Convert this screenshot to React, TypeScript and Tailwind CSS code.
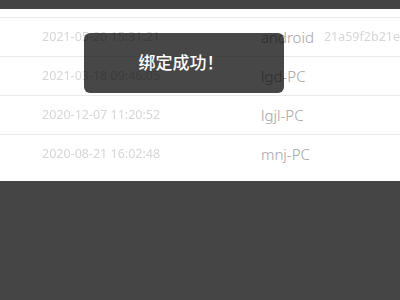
import React from 'react';

const rows = [
  { time: '2021-05-20 15:31:21', device: 'android', id: '21a59f2b21e7' },
  { time: '2021-03-18 09:46:05', device: 'lgd-PC', id: '' },
  { time: '2020-12-07 11:20:52', device: 'lgjl-PC', id: '' },
  { time: '2020-08-21 16:02:48', device: 'mnj-PC', id: '' },
];

const App: React.FC = () => {
  return (
    <div
      className="relative w-[400px] h-[300px] overflow-hidden bg-[#454545]"
      style={{ fontFamily: '"Noto Sans", "Noto Sans CJK SC", sans-serif' }}
    >
      <div className="h-[9px] bg-[#444444]" />
      <div className="bg-white pb-[7px]">
        <div className="h-[9px] border-b border-[#e9e9e9]" />
        {rows.map((row, i) => (
          <div
            key={i}
            className={`flex items-center h-[39px] ${i < rows.length - 1 ? 'border-b border-[#e9e9e9]' : ''}`}
          >
            <div className="w-[261px] shrink-0 pl-[42px] text-[12.5px] text-[#d6d6d6] blur-[0.5px] whitespace-nowrap">{row.time}</div>
            <div className="flex flex-1 min-w-0 overflow-hidden items-center gap-[10px] text-[15px] font-light text-[#a3a3a3] whitespace-nowrap">
              <span>{row.device}</span>
              {row.id && <span className="text-[12.5px] font-normal text-[#d6d6d6] blur-[0.5px]">{row.id}</span>}
            </div>
          </div>
        ))}
      </div>

      {/* toast */}
      <div className="absolute left-[84px] top-[33px] w-[200px] h-[60px] rounded-[6px] bg-[rgba(0,0,0,0.72)] flex items-center justify-center">
        <span className="text-white text-[17px] font-medium pr-[6px]">绑定成功！</span>
      </div>
    </div>
  );
};

export default App;
